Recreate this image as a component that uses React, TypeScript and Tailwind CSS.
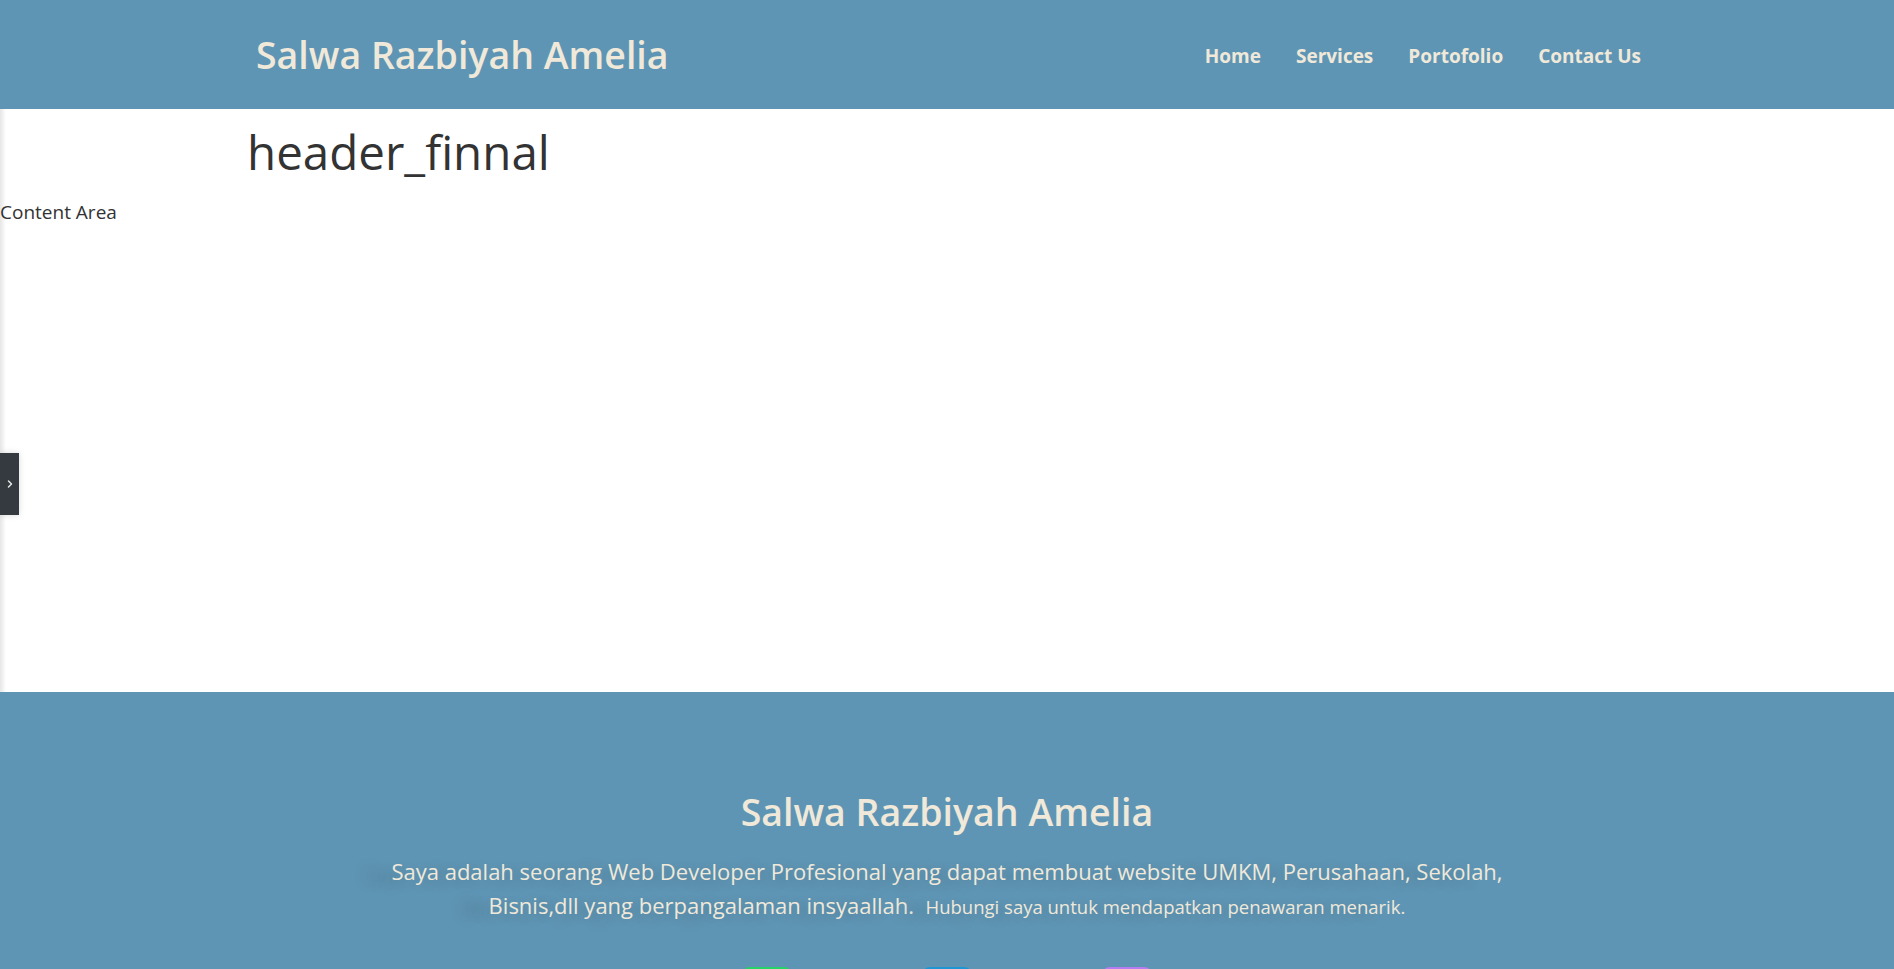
import React from 'react';
import { ChevronRight } from 'lucide-react';

const navLinks = ['Home', 'Services', 'Portofolio', 'Contact Us'];

const socials = [
  { name: 'whatsapp', color: 'bg-[#25d366]' },
  { name: 'telegram', color: 'bg-[#1e96d4]' },
  { name: 'instagram', color: 'bg-[#b57cf2]' },
];

export default function App() {
  return (
    <div className="min-h-screen flex flex-col bg-white font-['Open_Sans','Noto_Sans',sans-serif] text-[#333333] overflow-hidden">
      {/* Header */}
      <header className="h-[109px] bg-[#5f95b4] shrink-0">
        <div className="w-[1400px] mx-auto h-full flex items-center justify-between pl-[9px] pr-[6px]">
          <h2 className="text-[37.5px] leading-[1.2] font-semibold text-[#f0e9da] pb-[1px]">Salwa Razbiyah Amelia</h2>
          <nav className="flex items-center gap-[35px] pt-[3px]">
            {navLinks.map(link => (
              <a key={link} href="#" className="text-[19px] font-bold text-[#f0e9da]">
                {link}
              </a>
            ))}
          </nav>
        </div>
      </header>

      {/* Content */}
      <main className="relative h-[583px] shrink-0">
        <div className="absolute left-0 top-0 h-full w-[6px] bg-gradient-to-r from-black/10 to-transparent" />
        <div className="w-[1400px] mx-auto pt-[14px]">
          <h1 className="text-[47.5px] leading-[1.2] font-normal">header_finnal</h1>
        </div>
        <p className="mt-[18px] text-[19px] leading-[1.5]">Content Area</p>

        {/* Collapsed sidebar toggle */}
        <button className="fixed left-0 top-[453px] w-[19px] h-[62px] bg-[#343a40] flex items-center justify-center shadow-[0_0_6px_rgba(0,0,0,0.15)]">
          <ChevronRight className="w-[12px] h-[12px] text-[#e5e5e5]" strokeWidth={3} />
        </button>
      </main>

      {/* Footer */}
      <footer className="bg-[#5f95b4] pt-[97px] pb-[60px] text-center text-[#f0e9da] shrink-0">
        <h2 className="text-[37.5px] leading-[1.2] font-semibold">Salwa Razbiyah Amelia</h2>
        <p className="max-w-[1160px] mx-auto mt-[20px] text-[22px] leading-[34px] [text-shadow:-28px_3px_14px_rgba(0,0,0,0.18)]">
          Saya adalah seorang Web Developer Profesional yang dapat membuat website UMKM, Perusahaan, Sekolah, Bisnis,dll yang berpangalaman insyaallah.{'\u00a0 '}
          <span className="text-[18.5px]">Hubungi saya untuk mendapatkan penawaran menarik.</span>
        </p>
        <div className="mt-[43px] flex justify-center gap-[130px]">
          {socials.map(s => (
            <a key={s.name} href="#" aria-label={s.name} className={`w-[50px] h-[50px] rounded-lg ${s.color}`} />
          ))}
        </div>
      </footer>
    </div>
  );
}
